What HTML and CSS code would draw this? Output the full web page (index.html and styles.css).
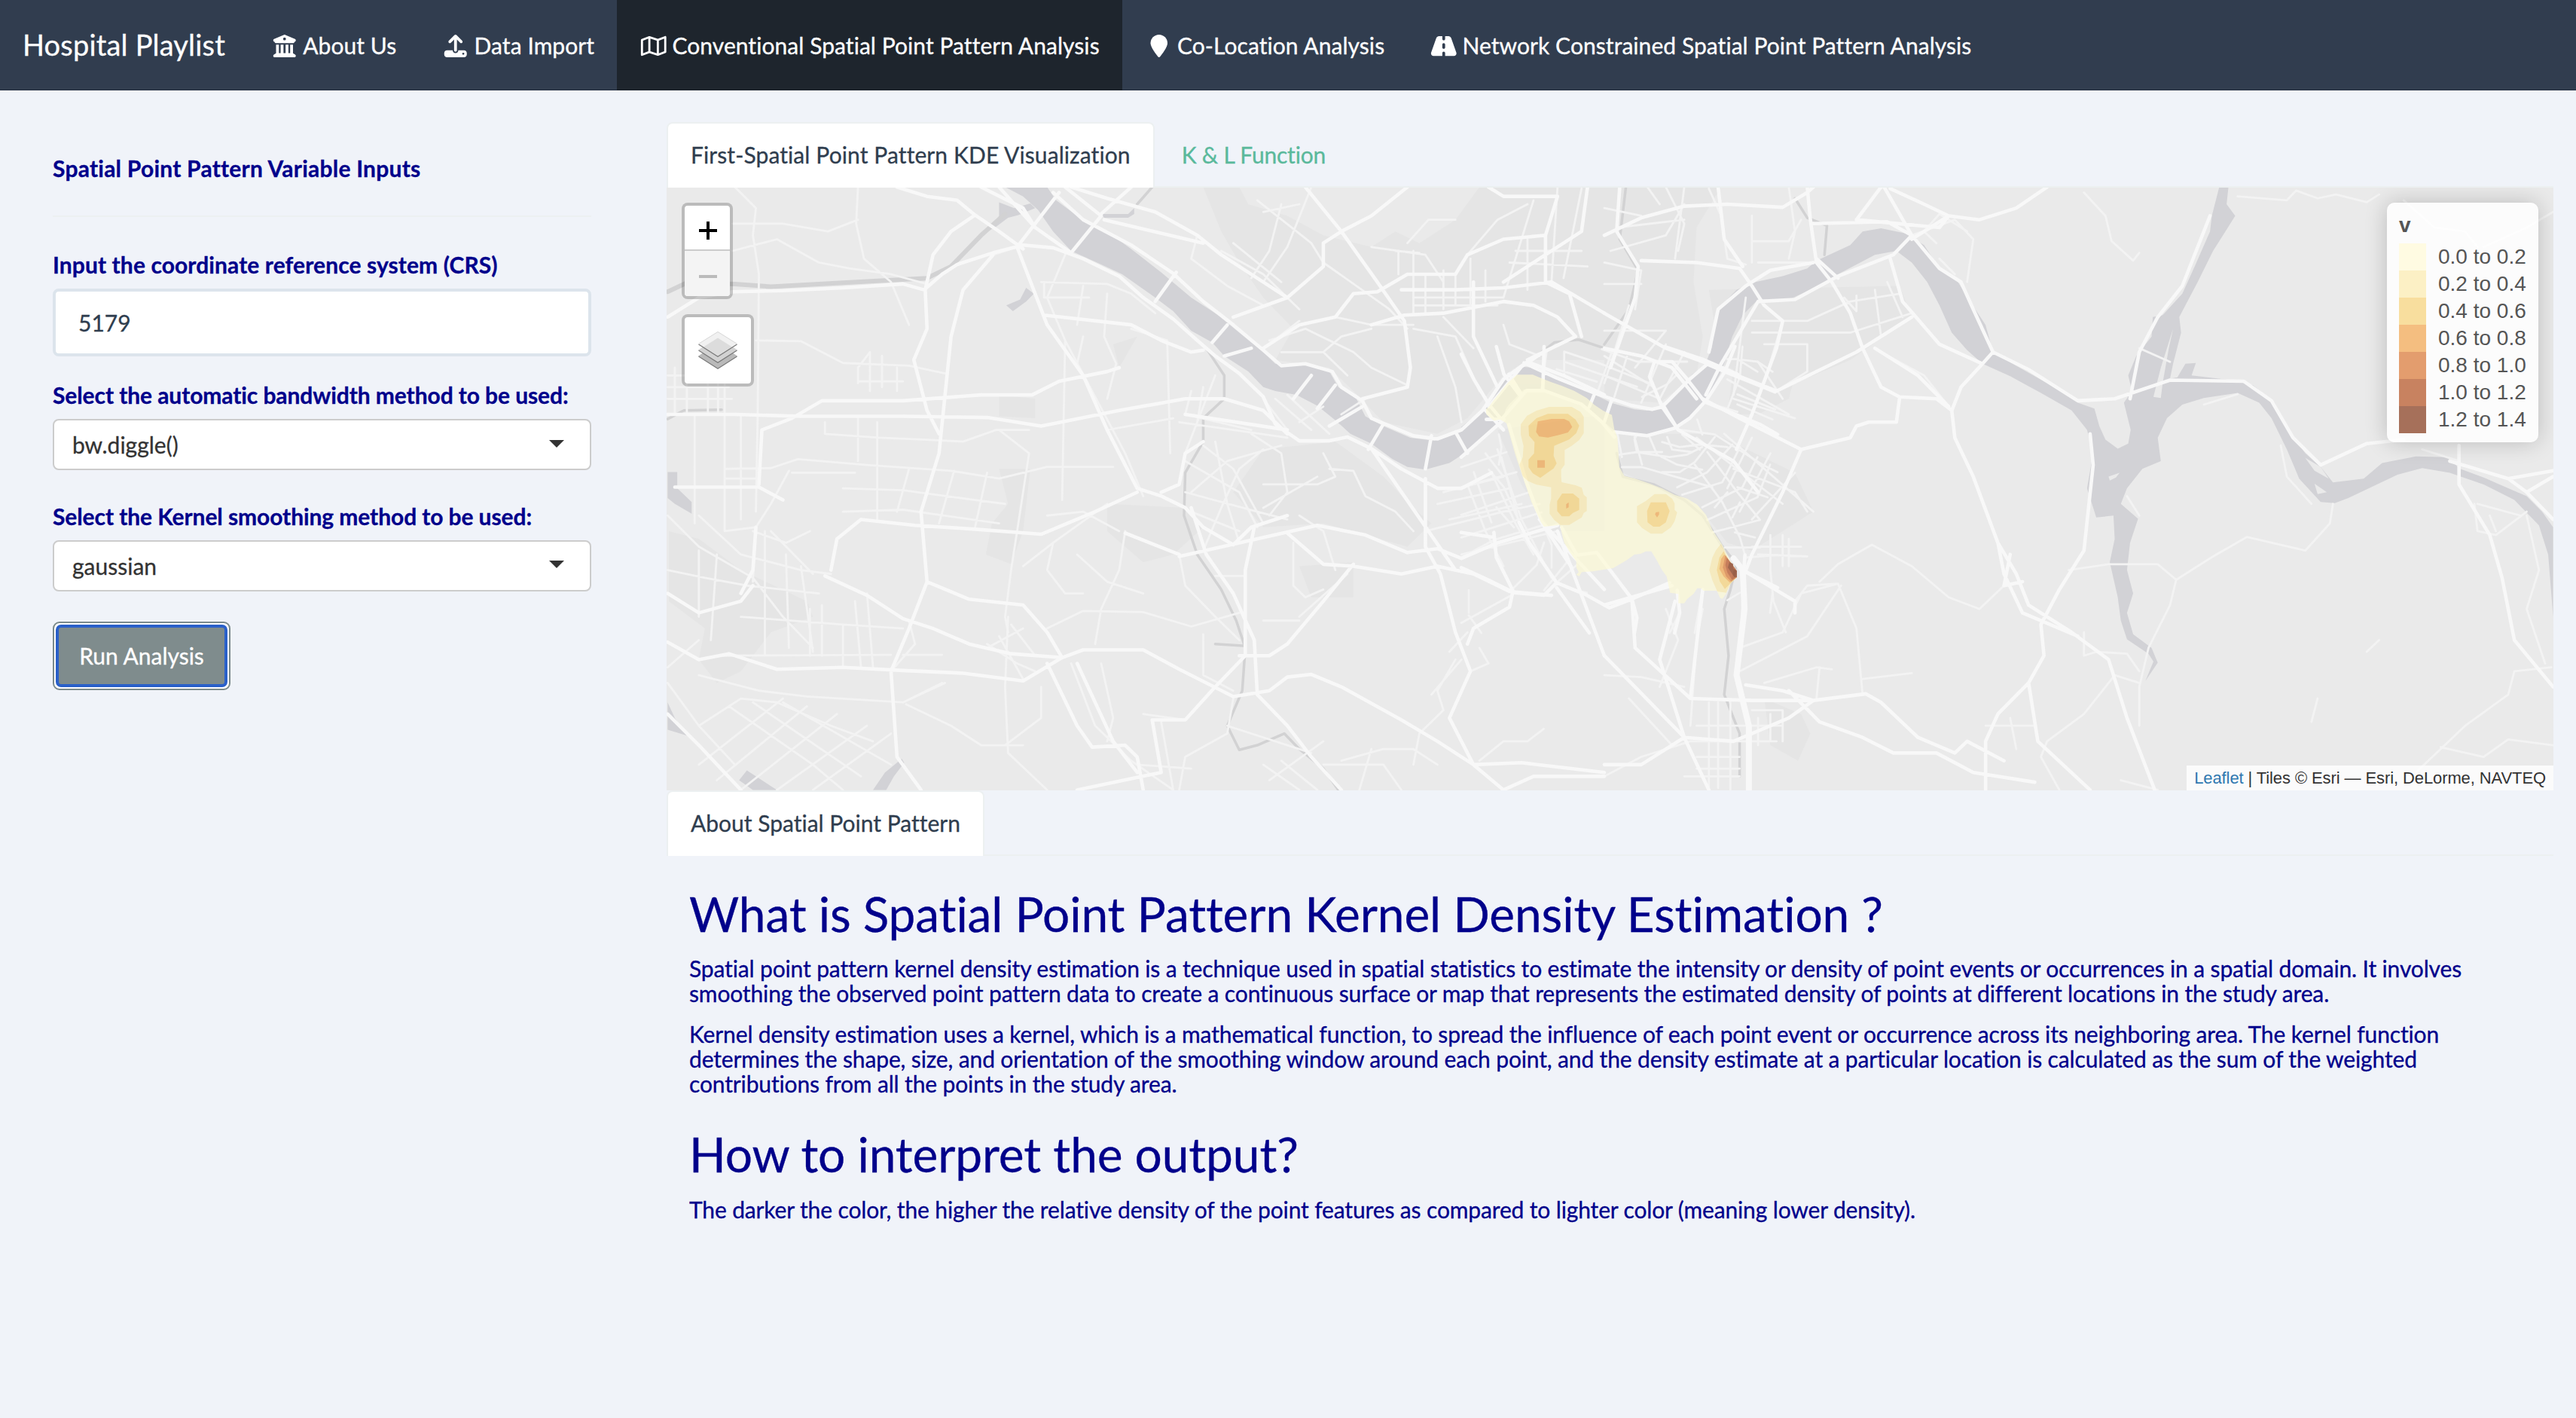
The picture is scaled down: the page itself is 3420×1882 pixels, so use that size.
FILE: index.html
```html
<!DOCTYPE html>
<html lang="en">
<head>
<meta charset="utf-8">
<title>Hospital Playlist</title>
<link rel="stylesheet" href="styles.css">
</head>
<body>
<nav class="navbar">
  <span class="brand">Hospital Playlist</span>
  <a class="nav-link"><svg class="icon" viewBox="-64 0 640 512"><path d="M243.4 2.6l-224 96c-14 6-21.8 21-18.7 35.800S16.800 160 32 160v8c0 13.300 10.700 24 24 24H456c13.300 0 24-10.700 24-24v-8c15.200 0 28.300-10.700 31.300-25.600s-4.800-29.900-18.700-35.800l-224-96c-8-3.400-17.200-3.400-25.200 0zM128 224H64V420.300c-.6 .3-1.200 .7-1.800 1.100l-48 32c-11.700 7.800-17 22.400-12.900 35.900S17.900 512 32 512H480c14.100 0 26.500-9.200 30.600-22.700s-1.100-28.100-12.900-35.900l-48-32c-.6-.4-1.200-.7-1.800-1.100V224H384V416H344V224H280V416H232V224H168V416H128V224zM256 64a32 32 0 1 1 0 64 32 32 0 1 1 0-64z"/></svg>About Us</a>
  <a class="nav-link"><svg class="icon" viewBox="-64 0 640 512"><path d="M288 109.300V352c0 17.700-14.300 32-32 32s-32-14.300-32-32V109.300l-73.400 73.400c-12.500 12.500-32.800 12.500-45.300 0s-12.500-32.800 0-45.300l128-128c12.500-12.500 32.800-12.500 45.300 0l128 128c12.500 12.500 12.500 32.800 0 45.300s-32.800 12.500-45.300 0L288 109.300zM64 352H192c0 35.300 28.700 64 64 64s64-28.700 64-64H448c35.300 0 64 28.700 64 64v32c0 35.300-28.700 64-64 64H64c-35.300 0-64-28.700-64-64V416c0-35.300 28.700-64 64-64zM432 456a24 24 0 1 0 0-48 24 24 0 1 0 0 48z"/></svg>Data Import</a>
  <a class="nav-link active"><svg class="icon" viewBox="-32 0 640 512"><path d="M565.600 36.200C572.100 40.700 576 48.100 576 56V392c0 10-6.200 18.900-15.500 22.400l-168 64c-5.200 2-10.900 2.100-16.100 .3L192.500 417.500l-160 61c-7.400 2.800-15.700 1.800-22.200-2.700S0 463.900 0 456V120c0-10 6.100-18.900 15.500-22.400l168-64c5.200-2 10.900-2.100 16.100-.3L383.500 94.500l160-61c7.400-2.800 15.700-1.800 22.200 2.700zM48 136.500V421.200l120-45.700V90.800L48 136.500zM360 422.700V137.300l-144-48V374.700l144 48zm48-1.500l120-45.700V90.800L408 136.500V421.200z"/></svg>Conventional Spatial Point Pattern Analysis</a>
  <a class="nav-link"><svg class="icon" viewBox="-128 0 640 512"><path d="M384 192c0 87.400-117 243-168.300 307.200c-12.300 15.300-35.100 15.300-47.400 0C117 435 0 279.400 0 192C0 86 86 0 192 0S384 86 384 192z"/></svg>Co-Location Analysis</a>
  <a class="nav-link"><svg class="icon" viewBox="-32 0 640 512"><path d="M256 32H181.200c-27.100 0-51.300 17.100-60.300 42.600L3.100 407.200C1.100 413 0 419.200 0 425.400C0 455.500 24.500 480 54.600 480H256V416c0-17.700 14.300-32 32-32s32 14.300 32 32v64H521.400c30.200 0 54.600-24.500 54.600-54.600c0-6.200-1.100-12.400-3.100-18.200L455.100 74.600C446 49.100 421.900 32 394.800 32H320V96c0 17.700-14.300 32-32 32s-32-14.300-32-32V32zm64 192v64c0 17.700-14.300 32-32 32s-32-14.300-32-32V224c0-17.700 14.300-32 32-32s32 14.300 32 32z"/></svg>Network Constrained Spatial Point Pattern Analysis</a>
</nav>

<div class="layout">
  <aside class="sidebar">
    <p class="label title">Spatial Point Pattern Variable Inputs</p>
    <hr class="rule">
    <label class="label crs">Input the coordinate reference system (CRS)</label>
    <div class="text-input">5179</div>
    <label class="label">Select the automatic bandwidth method to be used:</label>
    <div class="select"><span>bw.diggle()</span><i class="caret"></i></div>
    <label class="label">Select the Kernel smoothing method to be used:</label>
    <div class="select"><span>gaussian</span><i class="caret"></i></div>
    <button class="run"><span class="run-ring">Run Analysis</span></button>
  </aside>

  <main class="content">
    <div class="tabs">
      <a class="tab active wide">First-Spatial Point Pattern KDE Visualization</a>
      <a class="tab">K &amp; L Function</a>
    </div>
    <div class="map">
      <svg class="tiles" viewBox="885 249 2505 800" preserveAspectRatio="none">
        <defs>
          <clipPath id="frame"><rect x="885" y="249" width="2505" height="800"/></clipPath>
        </defs>
        <g clip-path="url(#frame)">
        <!-- parks and built-up tint -->
        <g class="park" transform="translate(880 240) scale(.79719 .51658)">
          <path d="M560 740L612 740 600 900 580 985 538 960 548 880 575 830zM900 16L960 16 975 60 1040 90 1100 140 1180 170 1220 130 1260 160 1320 100 1360 16 1568 16V460L1440 460 1400 500 1340 610 1290 650 1200 620 1150 540 1110 480 1020 460 1050 380 1000 300 960 210 930 130zM1000 690L1120 670 1200 760 1250 840 1280 880 1240 940 1100 880 1000 890 950 800zM10 900L60 920 130 1000 240 1080 250 1120 180 1160 130 1260 90 1290 60 1230 70 1150 10 1080zM740 830L870 840 900 890 850 960 800 980 740 900zM1060 990L1150 980 1150 1070 1080 1070zM750 420L790 400 760 480zM560 550L620 560 620 610 560 605zM1390 640L1568 600V900L1480 900 1430 780z"/>
        </g>
        <g class="park" transform="translate(2130 240) scale(.81633 .51658)">
          <path d="M0 16L190 16 150 120 145 260 160 400 150 500 90 570 0 560zM210 480L300 400 320 440 300 560 250 600 200 600zM20 650L180 650 310 750 340 850 240 950 200 930 150 830 30 750zM170 280L480 270 500 350 400 460 280 540 190 470zM260 1330L320 1370 335 1420 315 1490 270 1450z"/>
        </g>

        <!-- water -->
        <g class="water" transform="translate(880 240) scale(.79719 .51658)">
          <path d="M570 16L600 40 625 75 650 130 680 180 730 215 765 240 820 300 850 335 880 385 915 415 935 450 975 490 1000 530 1020 540 1055 550 1090 578 1120 615 1145 650 1180 675 1215 715 1240 735 1270 742 1310 725 1345 690 1400 610 1420 480 1395 540 1360 605 1320 650 1285 668 1245 660 1200 630 1170 605 1155 560 1125 530 1110 490 1060 470 1020 470 1000 440 960 390 925 345 880 300 830 235 780 175 740 130 690 90 655 50 640 16z"/>
          <path d="M560 55L585 70 612 58 620 70 592 88 575 95 555 118 540 130 560 90zM605 275L618 290 605 310 583 335 572 320 595 305zM8 748L24 748 24 790 48 825 48 855 20 830 8 815zM8 1340L20 1380 40 1425 8 1410zM140 1515L190 1565H150L127 1540zM398 1485L402 1495 385 1530 372 1565H350L370 1520zM730 85H775L785 70V85L775 95H735z"/>
        </g>
        <g class="water" transform="translate(1940 460) scale(.33333)">
          <path d="M0 320L50 280 110 235 150 170 190 110 240 80 300 85 380 130 520 185 600 225 690 250 740 255 800 240 860 180 920 110 970 75 1000 0 1068 0 1050 60 1030 110 975 210 900 290 850 325 780 350 700 350 610 335 570 300 500 245 400 205 330 175 250 170 190 230 150 290 40 400 0 415z"/>
        </g>
        <g class="water" transform="translate(2130 240) scale(.81633 .51658)">
          <path d="M175 430L178 380 190 320 215 280 240 262 290 245 330 225 345 205 400 165 420 130 450 122 490 135 520 165 545 225 575 260 595 310 620 370 632 440 670 475 720 520 770 570 797 585 805 630 815 665 835 688 852 675 856 640 845 570 858 540 852 500 865 450 890 400 892 350 908 345 940 290 960 220 985 130 988 90 1000 16 1015 16 1012 60 1026 90 1010 130 990 180 965 260 935 350 938 390 925 470 920 508 932 505 945 470 962 468 955 500 1020 512 1055 525 1090 570 1112 640 1140 700 1165 735 1185 775 1235 765 1265 725 1320 708 1370 710 1392 740 1430 762 1470 790 1500 810 1525 850 1543 890 1543 1120 1535 960 1520 885 1480 820 1430 780 1375 750 1330 738 1290 755 1250 785 1210 815 1188 828 1165 825 1130 765 1110 690 1085 610 1065 570 1030 545 975 558 940 575 915 610 900 660 905 720 875 740 850 790 840 830 868 868 855 930 850 1000 860 1060 850 1110 860 1165 890 1200 900 1238 880 1285 893 1235 885 1215 850 1178 840 1130 835 1070 822 980 830 920 828 860 800 865 785 790 795 700 785 640 760 590 710 545 660 502 615 470 590 435 565 390 545 320 525 260 500 210 475 180 440 190 380 240 335 280 300 305 250 305 225 345 208 400 202 430z"/>
          <path class="land" d="M893 555L905 480 925 380 918 430 908 520 905 558zM1140 712L1165 735 1178 765 1155 745zM1155 778L1175 800 1160 805zM820 760L838 750 832 762 822 770z"/>
        </g>

        <!-- streams -->
        <g class="stream" transform="translate(880 240) scale(.79719 .51658)">
          <path class="canal" d="M8 285L40 262 120 265 180 272 300 262 440 250 480 220 530 140 570 85"/>
          <path d="M905 430L935 500 935 560 900 610 900 670 870 750 868 860 890 960 930 1050 955 1130 970 1200 965 1310 940 1400 960 1462 990 1450 1035 1420 1060 1460 1100 1510 1125 1565M8 612L35 590 98 588M790 60L815 16M1455 450L1485 415 1525 408 1568 430M920 1190L970 1195"/>
        </g>
        <g class="stream" transform="translate(2130 240) scale(.81633 .51658)">
          <path d="M310 45L330 95 362 115 358 190M35 16L25 150 55 230 40 330 0 420M20 700L30 760 80 780 130 820 160 860 190 935 215 985 205 1050 195 1100 202 1220 195 1320 220 1420 220 1530"/>
        </g>

        <!-- minor streets -->
        <g class="minor" transform="translate(880 240) scale(.79719 .51658)">
          <path d="M120 16L155 70 150 140 160 240 158 600 155 850M325 16L322 110 335 200 380 260 410 370M116 110L200 110 275 130 325 100M116 180L190 150 260 210 310 225 380 240 440 265M155 410L230 412 300 468 410 475 470 495M53 600V880M103 500V900L155 890M130 600V870M8 500H110M8 530H110M8 560H115M20 480V600M40 480V600M75 480V600M92 480V600M105 740L180 738 225 715 340 730 480 745 560 765 640 735 750 735M105 765H155M325 520V480L345 440V540M365 450V530M390 480V540M325 515H400M325 610V720M357 620V870M270 620V650L360 660 440 665 500 670 555 640H610M300 790L400 795 520 820 570 830M300 850L400 845 560 880M410 740L390 850M485 745L460 880M540 750L520 890M560 640L610 700 590 900 580 1000 570 1120 575 1160M210 745L180 830 155 890 150 1030M215 750H320M245 900L205 930 150 900M8 860L60 940 150 1020 200 1120 250 1200M60 860L130 960 230 1000 280 1010M8 1000L70 1020 140 1040 260 1060M60 950V1120M90 960L80 1180M180 900L250 1010M170 900V1220M205 960L210 1200M230 990L250 1210M245 1100V1220M265 1090V1220M130 1120L300 1140 400 1150M100 1220L380 1218M400 1218H465M60 1270L160 1310 240 1325 400 1340 470 1290M300 1140V1250M320 1080L330 1250M340 1060L350 1250M60 1400L130 1330 190 1340 280 1400 350 1440M60 1500L200 1330M90 1540L240 1350M130 1565L290 1370M190 1565L340 1400M250 1565L380 1420M110 1350L250 1500 300 1565M150 1340L330 1530M200 1340L380 1500M8 1290L60 1400 120 1500M8 1250L60 1180M635 260V300H710M630 260L740 265 780 290 820 340M700 270L690 370M740 290L735 400 755 470 740 560M670 190L640 300 670 410 770 700 800 810M670 410L665 820M700 400L690 470 720 560M780 380L840 410 845 700M740 640L850 610M550 190L590 170M890 140L880 200 940 270 1000 320M930 180L1000 240 1060 330M950 160L1030 260M980 250L1010 180 1030 60M1000 260L1040 170 1080 16M990 50L1080 160 1100 210M1060 60L1000 80M1180 170L1270 190 1300 260M1225 180V240M1250 180V340M1270 240V340M1300 230V330M1320 240V320M1345 200V320M1370 230V310M1220 180L1260 185M1250 300H1400M1250 320H1390M1100 210L1210 330 1240 380M1320 100L1275 100 1240 160M1340 190L1390 100 1440 60M1450 50L1420 200 1400 300M1490 16L1480 260M1530 20L1500 250M1420 180H1530M1410 210L1540 220M1440 150V280M1400 370L1410 420 1460 450M1290 400L1320 530 1330 620M1350 430L1300 350M1250 380L1320 400 1360 540M1120 350L1180 370 1250 370M1010 410L1070 380 1150 440 1180 480 1240 525M1030 440L1100 440 1130 400 1180 380M1100 440L1140 500M1060 360L1010 420M880 540L870 600 980 640M900 530L890 620M920 500L870 700M860 620L1040 660M1000 560L1040 640M1020 560L1080 640M1040 550L1110 650M1130 600L1170 560M1060 620L1100 580M900 680L950 740 1000 880M870 720L960 800 990 890M920 670L940 830 960 930M1000 690L960 740 930 840 900 950M1030 680L940 720 880 800M980 650L1030 700 1040 800 1010 860M1100 700L1120 760 1090 780 1000 780M1110 740L1150 745 1170 810 1220 850 1250 900M870 800L990 850 1040 870M880 850L960 900M1000 840L1090 760M1060 860L1100 900 1120 1000M640 860L700 850 760 900M600 990L650 930 740 830M650 930L640 1000 670 1060 700 1060M770 900L760 1000 730 1100 720 1190M690 960L740 1030 800 1060M860 960L870 1040 920 1120 960 1180M640 1150L700 1105 800 1108 880 1145 960 1110M1050 930L1050 1040 1070 1070 1100 1050M920 1015H970M1000 1130H1060M1140 1010L1060 1120M900 1165V1270L950 1310M800 1370L870 1385M730 1240L750 1380 740 1440M680 1240L720 1400 780 1490 850 1565M630 1300V1380L570 1450M575 1120L570 1300 575 1470 640 1565M560 1170L600 1280M580 1140L620 1220M600 1150L540 1200M540 1190L590 1240 620 1260M860 1565L870 1480 940 1420 950 1330M790 1500L880 1510M830 1390L850 1565M1000 1500L1060 1565M1010 1540L1100 1440M1030 1490L1090 1565M940 1400L1080 1470M1130 1490L1200 1460 1250 1460 1290 1500M1100 1500H1200L1230 1565M1180 1460L1160 1565M1360 1490L1400 1440 1440 1440 1467 1408M1320 1230L1290 1310 1300 1360 1260 1420 1250 1500M1345 1260L1375 1240 1360 1200M1280 1320L1330 1230M1340 1160L1310 1210M405 1345L480 1400 530 1450 600 1450M465 1290L400 1340M380 1260L420 1190 410 1130M1300 800L1400 760M1290 830L1410 790M1310 870L1430 830M1340 780L1370 900 1400 990M1380 750L1420 880 1450 960M1270 900L1400 850 1460 830M1330 960L1490 900M1390 690L1430 870 1480 1020M1370 700L1400 760"/>
        </g>
        <g class="minor" transform="translate(1940 460) scale(.33333)">
          <path d="M630 430L700 420 800 420M620 340L640 440M640 480L720 480 860 520 1000 560M690 360L720 470M750 360L780 430 860 470 960 490M820 360L840 410 920 420M880 350L950 410M860 330L1010 350 1200 470 1260 500M800 380L870 400 950 390 1060 400M700 350L690 370 700 420 760 430 830 440 900 430 960 400M800 500L870 500 930 460 1010 360M860 560L980 500 1080 390M880 590L1040 540 1110 400M960 640L1120 560 1180 440M980 690L1180 600 1230 470M1000 740L1190 690M930 470L1040 620 1110 760 1130 830M980 420L1100 580 1190 690M1100 560L1220 600M1060 580L1010 640M1110 620L1080 680M1050 800L1190 800M1090 740L1170 760M1130 840L1260 830M0 480L180 420M0 560L220 500M0 670L270 580M0 760L320 660M0 840L130 770 330 710M50 500L120 700M110 490L170 560 250 740M160 440L230 700M150 470L160 400 150 350M410 20L560 70 760 150M410 60L700 160M380 90L540 140M600 20L540 190M660 40L610 200M410 20V110M340 20L320 170M560 10L700 60 900 60M720 200L820 150 860 110M1100 190L1250 250M1100 230L1240 290M1060 50L1100 50 1180 100M1120 0L1110 120 1060 250M1180 60L1240 100M940 290L960 350M970 220L1100 260M140 640L210 720M330 720L360 790 360 880M200 970L300 870 330 780M330 970L420 860M380 940L460 870M420 960L500 980M960 970L930 1140M860 1000L870 1060 830 1140M1060 1010L1110 980M1240 980L1230 1060M30 1070L80 1140M30 970V1060M0 1100L200 990"/>
        </g>
        <g class="minor" transform="translate(2130 240) scale(.81633 .51658)">
          <path d="M0 70L60 90M10 180L100 140 130 60M0 210L60 230 50 330M0 265H60M70 16L90 60M100 16L130 110 120 180M130 16L115 200M20 120L130 100M240 155H300L320 100M250 210H330M300 16L310 130 300 200M0 385H100L50 480M0 450L80 530M0 500L90 560M40 320L0 520M100 420L60 570M130 440L90 560M240 390H400L500 340M240 360H330L400 310 480 290M260 420H330V490L290 530M225 460L250 465 290 560M200 510L300 600M210 560L310 610M230 300L210 550M290 360L260 520M390 300L410 335 410 295M440 280L450 400M460 260L485 350M780 30L815 90 825 155 860 205 870 185M1030 40L1110 50 1125 25 1160 45 1190 35 1240 55 1260 35M500 140L570 100 600 150 590 260M540 160L520 130 545 85 590 130M450 440L520 500 560 580M545 200L570 240M170 20L190 90 200 200 230 215M240 90L240 210M870 430L920 465M350 1030L380 985 435 935 500 990 560 1070 610 1100 650 1040M755 1000L820 985 900 985 930 1025 990 965 1045 915 1140 950 1180 880 1185 830M930 1025L920 1090 885 1200 870 1300 870 1400M1320 1520L1400 1400 1470 1320 1480 1260 1540 1250M1360 1455L1430 1480 1470 1435 1543 1450M1300 50L1350 120 1400 130 1420 170M1543 80L1500 120 1430 170M1415 830L1420 900 1450 910 1500 850M1420 830L1490 860M1500 860L1520 1000 1500 1100 1530 1240M975 575L1030 548M1100 680L1110 760 1150 830M850 810L870 860M220 1200L290 1160 320 1060 380 1035 410 1150 420 1320M220 1260L330 1170 385 1040M420 1280L500 1265M260 1290L345 1250 370 1255M350 1250L345 1330M270 1000L275 1080 295 1160M310 1080L330 1040 380 1035M660 1380L670 1460M620 1400H700M780 1160V1220L800 1210M800 1210L850 1215 870 1260M830 1270L780 1370 720 1440 710 1480 740 1565M830 1270L870 1290M240 940H320M250 960L330 965M270 910V1000M290 910V990M300 920V990M170 1340V1560M185 1340V1560M205 1340V1565M240 1360H290V1440M250 1380V1450M270 1370V1440M140 1440H280M150 1400H290M150 1480H220M150 1510H220M130 1530H220M0 1270L60 1275 130 1300M40 1330L110 1450M0 1530L60 1480 140 1440M160 1100L150 1180 140 1400M100 1100L120 1180 90 1300M195 650L340 850M150 660L290 830M240 660L200 790M270 700L220 850M310 750L240 870M210 740L310 800 330 850M1330 690L1390 720M1450 900L1440 860M840 1540L900 1565M1160 1330L1150 1390M1260 1180L1240 1210"/>
        </g>

        <!-- main roads -->
        <g class="major" transform="translate(880 240) scale(.79719 .51658)">
          <path d="M390 16L440 40 490 50 520 88 560 130 600 175M8 350L60 300 116 285 200 282 300 275 400 265 435 280 465 240 490 215 550 185 600 165 650 172 700 200 760 245 800 300 850 355 890 410 920 450 960 495 1000 555 1020 625 1060 668 1110 668 1140 658 1180 688 1230 740 1290 790 1330 790 1380 750M520 88L480 130 450 190 437 280 440 380 418 460 440 590 460 650M660 30L610 130 590 170 610 250 640 370 700 500 740 640 790 790 830 810 870 840 900 890 950 935M680 16L740 45 820 80 890 140 930 190 1000 260 1040 300M560 16L620 120 680 185M530 16L600 70 620 120M650 30L700 100 780 165 850 238 900 310 950 370 1000 435 1030 475 1070 470 1115 490 1130 530 1165 565 1180 610 1250 655 1290 663 1330 640 1365 590 1400 510 1440 465 1500 500 1568 550M215 610L265 565 400 565 530 550 615 550 660 515 740 490 760 480M8 600L120 600 230 605 400 605 540 608 630 630 760 590 870 560 935 560 1000 590 1040 650M870 600L1040 640M635 345L780 370 830 410 880 440 900 435M550 190L500 280 480 400 460 700 430 850 440 1030 410 1150 380 1260 390 1480 430 1565M20 787L160 787 200 820M160 780L165 640 215 610M280 1000L290 920 330 870 420 885 520 895 630 908 720 850 790 800M830 800L860 780 870 700 900 670M155 890L150 1000 130 1060M270 1015L340 1065 400 1125 450 1150 510 1190 580 1215 665 1225 700 1205 800 1205 860 1255 950 1325 1010 1310 1040 1275 1080 1268 1130 1300 1230 1385 1290 1440 1350 1500 1430 1495 1568 1520M8 1185L60 1230 110 1215 190 1255 300 1250 400 1258 500 1265 600 1285 665 1225M8 1060L60 1110 130 1080 150 1040M440 1030L510 1075 600 1090 640 1160 665 1225M640 1240L690 1400 715 1455 770 1450 790 1480 800 1565M690 1240L750 1440 790 1520M8 1370L60 1450 130 1565M860 965L960 930 1090 885 1170 910 1240 955 1290 945 1330 970 1390 930 1490 885M770 905L860 960M1040 860L980 890 950 935M1150 985L1100 1080 1040 1190 1010 1220 960 1220M1040 905L1100 985 1150 990 1230 1010 1290 990 1350 1010 1410 1055 1480 1065M1270 765L1270 940 1295 1010 1320 1160 1345 1260 1310 1380 1350 1500M1415 1060L1410 1095 1350 1150 1340 1190M1180 688L1320 1000M985 890L970 1000 970 1220 920 1300 870 1385 815 1385 830 1520 690 1565M880 840L905 960 950 1060 985 1180 990 1320 1040 1400 1080 1480 1130 1565M950 350L1040 300 1100 220 1100 160 1130 130 1180 90 1240 16M1070 16L1130 130 1190 260 1235 360 1245 480 1240 530 1165 560M1000 430L1060 370 1120 350 1150 290 1190 285 1240 240 1320 240 1340 190 1400 150 1470 140M1180 370L1235 345 1300 340 1400 310 1450 320 1490 350 1520 400 1440 460M1375 16L1400 40 1420 40 1490 40 1470 140 1470 260 1510 290 1530 400M1230 280L1320 280 1400 275 1480 260 1568 340M1540 16L1530 130 1400 260M1350 260L1350 400 1390 530M670 16L730 90 680 185M730 85L780 16M735 100L900 160M855 235L820 310M940 370L915 415M980 430L935 450M1080 500L1050 560M1120 525L1090 585M1165 580L1110 630M1200 625L1175 690M1280 655L1270 740M1320 645L1340 700M1370 590L1400 640M1460 870L1568 1050M1490 900L1568 1220M1350 1500L1400 1565 1450 1530 1568 1530"/>
        </g>
        <g class="major" transform="translate(1940 460) scale(.33333)">
          <path d="M0 880L110 930 210 980 330 990 380 940 270 780 230 700M210 980L140 840 130 740M380 940L500 990 590 1040 680 1005 830 940M380 960L510 1140M400 720L460 830 540 820 680 1005 700 1080 690 1140M140 0L170 110 230 190M0 30L50 130 110 230 160 290M190 110L240 190M330 0L325 170M110 240L240 80 330 20M100 290L170 290 0 440M250 65L380 125 530 185 680 235 760 250 800 240 860 325M530 190L510 240M600 210L570 300M800 240L910 130 980 70 1050 100 1250 180M610 340L740 355 850 325 910 285 975 215 1050 100 1090 0M900 130L970 220 1190 310 1260 350M810 0L960 50 1100 110M800 240L750 120 770 60 840 60 900 130M1130 830L1125 900 1120 1140M1120 890L1260 960M860 970L870 1060 850 1140M160 290L260 175 330 175 480 230 560 300 610 360M190 310L260 540 320 700 440 880M0 740L130 760"/>
        </g>
        <g class="major" transform="translate(2130 240) scale(.81633 .51658)">
          <path d="M0 140L60 95 130 65 200 60 290 68 330 30 340 16M330 16L335 100 345 210 370 260 400 340 420 430 450 530 480 555 540 560 565 590 570 660 600 760 640 930 670 1010 690 1090 760 1160 820 1230 850 1380 895 1565M450 16L410 100 545 120 560 90M340 110L460 105 500 140M455 16L500 140 545 225 580 260 600 330 632 440 690 485 770 565 830 560 920 512 1040 515 1085 565 1120 660 1165 730 1240 675 1300 665M500 150L560 90 610 100 670 70 720 16M465 20L520 60 560 90M465 200L485 310 545 420 615 470 580 530 565 590M632 440L615 470M165 550L190 470 250 310 310 305 380 245 470 190 500 140M170 440L185 330 230 270 270 230 340 210M60 205L150 210 220 225 240 270 260 320 290 360 280 430 240 600 215 690M185 16L195 150 225 220M0 340L100 430 160 465 280 540 410 440 500 350M345 200L380 250M95 575L120 640 210 720 250 800M160 560L220 610 320 690 400 660 410 630 430 620 475 620 480 560M25 16L20 130 55 220 50 300 10 480M0 430L60 450 110 480 150 560M440 430L510 500 560 580M225 1000L310 1080 310 1110M790 650L795 730 780 950 740 1050 710 1140 715 1220 690 1290 640 1370 620 1440 620 1565M690 1290L705 1440 790 1565M230 1295L290 1310 340 1335 425 1318 450 1340 510 1430 570 1470 590 1440 650 1490M300 1310L350 1390 420 1430 470 1470 540 1470 600 1520 700 1545M1390 680L1390 780 1440 910 1460 1020 1480 1180 1543 1300M1375 720L1470 765 1500 800 1543 870M1470 765L1543 745M1500 800L1543 760M640 930L650 1010 680 1110 770 1170M660 960L650 1040 680 1030M985 90L940 270 900 350 870 440 855 560M0 1090L110 1040M45 1080L50 1200 140 1330 240 1335 340 1335M0 1220L130 1430 210 1440 300 1380 340 1335M115 1080L90 1230 130 1430M160 1050L140 1330M0 1500L60 1500 130 1430M130 1430L170 1565"/>
          <path class="trunk" d="M210 970L225 1000 228 1100 215 1270 235 1400 235 1565"/>
          <path d="M320 690L290 800 240 960 228 1010"/>
        </g>

        <!-- kernel density surface -->
        <g class="density" transform="translate(1940 460) scale(.33333)">
          <path class="d1" d="M98 250L112 238 130 212 158 178 185 145 210 122 222 112H285L310 122 355 140 400 156 450 176 500 205 530 232 565 255 600 272 610 330 622 360 630 480 650 515 690 525 750 545 800 565 850 590 900 605 940 630 975 670 1000 730 1040 790 1070 850 1098 895V918L1075 940 1055 985 1040 1005 1030 1000 1018 972H965L955 962H940L925 985 900 1005 888 1022H865V985L832 980 818 915 800 890 778 850 757 815H735L715 825 690 828 660 850 605 882 525 895 480 898 470 915 458 908 468 898 458 880 458 855 430 815 410 780 392 710 330 717 318 700 280 620 245 520 215 430 180 305 155 290 130 295 100 270z"/>
          <path class="d2" d="M350 240H440L475 260 488 280V345L470 372 440 395 412 412V470L398 490V520L400 540 455 552 480 562 488 590 500 600V655L488 662 480 680 450 698 430 710H395L370 690 352 665V630L358 605V560L300 550 265 535 245 515 232 470 245 440 248 395 237 350V310L262 275 300 255zM770 587H815L840 605 850 625V650L860 660 850 695 835 720 800 745H755L720 722 700 700V635L735 615zM1035 785L1065 850 1098 895V918L1072 945 1055 980 1020 975 1000 930 988 890 1000 840 1015 810z"/>
          <path class="d3" d="M345 268H425L455 290 470 315 458 345 430 370 370 395 368 435 380 465 368 485 340 505 315 523 285 505 268 480V450L290 425 292 380 270 355 268 315 300 285zM402 585H445L470 605V650L445 662 430 676H400L382 655V615zM755 620H815L830 655 815 700 790 717H765L742 700 740 655zM1045 815L1068 860 1098 900V918L1075 940 1050 965 1030 935 1018 890 1028 840z"/>
          <path class="d4" d="M305 298L360 288H410L430 298 442 320 425 342 390 352 345 362 310 358 298 340zM303 452H333V482H303zM418 628L428 620V640L418 645zM775 660L788 658V668L780 680 772 668zM1048 828L1075 870 1098 898V918L1070 940 1045 915 1028 885 1035 845z"/>
          <path class="d5" d="M1052 830L1098 895V918L1075 935 1055 915 1042 880z"/>
          <path class="d6" d="M1058 840L1098 893V918L1078 928 1060 900 1052 870z"/>
          <path class="d7" d="M1068 858L1082 865 1085 885 1098 893V918H1088L1062 880z"/>
        </g>
        </g>
      </svg>

      <div class="map-left">
        <div class="zoom"><div class="zoom-btn"><i class="bar"></i><i class="bar up"></i></div><div class="zoom-btn off"><i class="bar"></i></div></div>
        <div class="layers">
          <svg class="layers-icon" viewBox="0 0 52 50">
            <path fill="#b9b9b9" d="M0 32.500L26 16 52 32.500 26 49z"/><path class="edge" d="M.5 33L26 49.200 51.500 33"/>
            <path fill="#d2d2d2" d="M0 24.500L26 8 52 24.500 26 41z"/><path class="edge" d="M.5 25L26 41.200 51.500 25"/>
            <path fill="#f1f1f1" d="M0 16.500L26 0 52 16.500 26 33z"/><path fill="#dcdcdc" d="M7 20.500L26 8.500 45 20.500 26 32.500z"/><path class="edge" d="M.5 17L26 33.200 51.500 17"/>
            <path fill="none" stroke="#cfcfcf" stroke-width=".8" d="M.5 16.300L26 .4 51.500 16.300"/>
          </svg>
        </div>
      </div>
      <div class="legend">
        <strong class="legend-title">v</strong>
        <div class="legend-row"><i class="swatch s1"></i>0.0 to 0.2</div>
        <div class="legend-row"><i class="swatch s2"></i>0.2 to 0.4</div>
        <div class="legend-row"><i class="swatch s3"></i>0.4 to 0.6</div>
        <div class="legend-row"><i class="swatch s4"></i>0.6 to 0.8</div>
        <div class="legend-row"><i class="swatch s5"></i>0.8 to 1.0</div>
        <div class="legend-row"><i class="swatch s6"></i>1.0 to 1.2</div>
        <div class="legend-row"><i class="swatch s7"></i>1.2 to 1.4</div>
      </div>
      <div class="attribution"><a class="attr-link">Leaflet</a> | Tiles © Esri — Esri, DeLorme, NAVTEQ</div>
    </div>

    <div class="tabs">
      <a class="tab active">About Spatial Point Pattern</a>
    </div>
    <section class="about">
      <h2>What is Spatial Point Pattern Kernel Density Estimation ?</h2>
      <h5>Spatial point pattern kernel density estimation is a technique used in spatial statistics to estimate the intensity or density of point events or occurrences in a spatial domain. It involves<br>smoothing the observed point pattern data to create a continuous surface or map that represents the estimated density of points at different locations in the study area.</h5>
      <h5>Kernel density estimation uses a kernel, which is a mathematical function, to spread the influence of each point event or occurrence across its neighboring area. The kernel function<br>determines the shape, size, and orientation of the smoothing window around each point, and the density estimate at a particular location is calculated as the sum of the weighted<br>contributions from all the points in the study area.</h5>
      <h2>How to interpret the output?</h2>
      <h5>The darker the color, the higher the relative density of the point features as compared to lighter color (meaning lower density).</h5>
    </section>
  </main>
</div>
</body>
</html>
```

FILE: styles.css
```css
* { box-sizing: border-box; }

body {
  margin: 0;
  min-height: 1882px;
  background: #f0f3f9;
  color: #2f3d4e;
  font-family: Lato, sans-serif;
  font-size: 30px;
  font-variant-ligatures: none;
  line-height: 42.857px;
  -webkit-text-stroke: .3px currentColor;
}

/* top navigation */
.navbar {
  display: flex;
  height: 120px;
  background: #313d4f;
  color: #fff;
  letter-spacing: .06px;
  box-shadow: inset 0 -1px 0 #262f40;
}
.brand {
  display: flex;
  align-items: center;
  padding: 0 30px 2px;
  font-size: 38px;
  letter-spacing: .18px;
}
.nav-link {
  display: flex;
  align-items: center;
  padding: 0 30px;
  white-space: nowrap;
}
.nav-link.active { background: #1e252d; }
.icon {
  width: 37.5px;
  height: 30px;
  margin: 2px 5.8px 0 0;
  fill: currentColor;
}

.layout {
  display: flex;
  gap: 30px;
  padding: 42px 30px 0;
}

/* variable inputs */
.sidebar {
  display: flex;
  flex-direction: column;
  align-items: stretch;
  width: 825px;
  padding: 39.500px 70px 0 40px;
}
.label {
  margin: 0 0 10px;
  color: #00008b;
  font-weight: 700;
  letter-spacing: -.09px;
}
.title { margin: 0; letter-spacing: .23px; }
.crs { letter-spacing: .1px; }
.rule {
  width: 100%;
  height: 2px;
  margin: 42px 0;
  border: 0;
  background: #ecf0f1;
}
.text-input {
  display: flex;
  align-items: center;
  height: 90px;
  margin-bottom: 30px;
  padding: 0 30px;
  border: 4px solid #dce4ec;
  border-radius: 8px;
  background: #fff;
}
.select {
  display: flex;
  align-items: center;
  justify-content: space-between;
  height: 68px;
  margin-bottom: 40px;
  padding: 0 34px 0 24px;
  border: 2px solid #ccc;
  border-radius: 8px;
  background: #fff;
  color: #333;
}
.caret {
  margin-top: -3px;
  border: 10px solid transparent;
  border-top-color: #333;
  border-bottom: 0;
}
.run {
  align-self: flex-start;
  width: 236px;
  height: 91px;
  padding: 2px;
  border: 2px solid #7b8a8b;
  border-radius: 9px;
  background: #fff;
  color: #fff;
  font: inherit;
}
.run-ring {
  display: flex;
  align-items: center;
  justify-content: center;
  height: 100%;
  border: 4px solid #2a60c9;
  border-radius: 7px;
  background: #7f8c8d;
}

/* tabs */
.content { width: 2505px; }
.tabs {
  display: flex;
  gap: 4px;
  height: 86.860px;
  border-bottom: 2px solid #ecf0f1;
}
.tab {
  height: 86.860px;
  padding: 20px 30px;
  border: 2px solid transparent;
  border-bottom: 0;
  border-radius: 8px 8px 0 0;
  color: #5ab99b;
  letter-spacing: -.2px;
  white-space: nowrap;
}
.tab.active {
  border-color: #ecf0f1;
  background: #fff;
  color: #2f3d4e;
  letter-spacing: 0;
}
.tab.wide { letter-spacing: .1px; }

/* map */
.map {
  position: relative;
  height: 800px;
  overflow: hidden;
  background: #eaeaea;
  font-family: "Liberation Sans", Arial, sans-serif;
  -webkit-text-stroke: 0;
}
.tiles { display: block; width: 2505px; height: 800px; }
.tiles path { vector-effect: non-scaling-stroke; stroke-linejoin: round; stroke-linecap: round; }
.park { fill: #e5e5e5; }
.water { fill: #d2d2d6; }
.water .land { fill: #eaeaea; }
.stream { fill: none; stroke: #d2d2d3; stroke-width: 3.500px; }
.stream .canal { stroke-width: 6px; }
.minor { fill: none; stroke: #f3f3f3; stroke-width: 2.800px; }
.major { fill: none; stroke: #f8f8f8; stroke-width: 4.600px; }
.major .trunk { stroke-width: 8px; }
.density { opacity: .7; }
.d1 { fill: #fdfad6; }
.d2 { fill: #fbeaae; }
.d3 { fill: #f7d277; }
.d4 { fill: #f0a44c; }
.d5 { fill: #d87833; }
.d6 { fill: #b6501f; }
.d7 { fill: #812f0d; }

.map-left {
  position: absolute;
  top: 20px;
  left: 20px;
  display: flex;
  flex-direction: column;
  align-items: flex-start;
  gap: 20px;
}
.zoom, .layers {
  border: 4px solid rgba(0, 0, 0, .2);
  border-radius: 8px;
  background: #fff;
  background-clip: padding-box;
}
.zoom { width: 68px; height: 128px; }
.zoom-btn {
  display: grid;
  place-items: center;
  height: 60px;
  padding: 9px 0 0 2px;
  border-bottom: 2px solid #ccc;
  color: #000;
}
.zoom-btn.off { border: 0; border-radius: 0 0 4px 4px; background: #f4f4f4; color: #bbb; }
.bar { grid-area: 1 / 1; width: 24px; height: 4px; background: currentColor; }
.bar.up { width: 4px; height: 24px; }
.layers {
  display: grid;
  place-items: center;
  width: 96px;
  height: 96px;
}
.layers-icon { width: 52px; height: 50px; }
.layers-icon .edge { fill: none; stroke: #777; stroke-width: 1.200; }

.legend {
  position: absolute;
  top: 20px;
  right: 20px;
  width: 201px;
  height: 318px;
  padding: 12px 16px;
  border-radius: 10px;
  background: rgba(255, 255, 255, .85);
  box-shadow: 0 0 30px rgba(0, 0, 0, .2);
  color: #555;
  font-size: 28px;
  line-height: 36px;
}
.legend-title { display: block; height: 42px; }
.legend-row { display: flex; gap: 16px; white-space: nowrap; }
.swatch { width: 36px; height: 36px; }
.s1 { background: #fffbe2; }
.s2 { background: #fcf0c5; }
.s3 { background: #f8de9e; }
.s4 { background: #f4be80; }
.s5 { background: #e39d6e; }
.s6 { background: #c88260; }
.s7 { background: #a6705a; }

.attribution {
  position: absolute;
  right: 0;
  bottom: 0;
  padding: 0 10px;
  background: rgba(255, 255, 255, .8);
  color: #333;
  font-size: 22px;
  letter-spacing: -.1px;
  line-height: 33px;
  white-space: nowrap;
}
.attr-link { color: #2f78b0; }

/* description */
.about { padding: 0 30px; }
.about h2, .about h5 {
  color: #00008b;
  font-weight: 400;
  letter-spacing: -.14px;
  line-height: 1.1;
  white-space: nowrap;
}
.about h2 { margin: 42px 0 21px; font-size: 64px; }
.about h5 { margin: 21px 0; font-size: 30px; }
```
